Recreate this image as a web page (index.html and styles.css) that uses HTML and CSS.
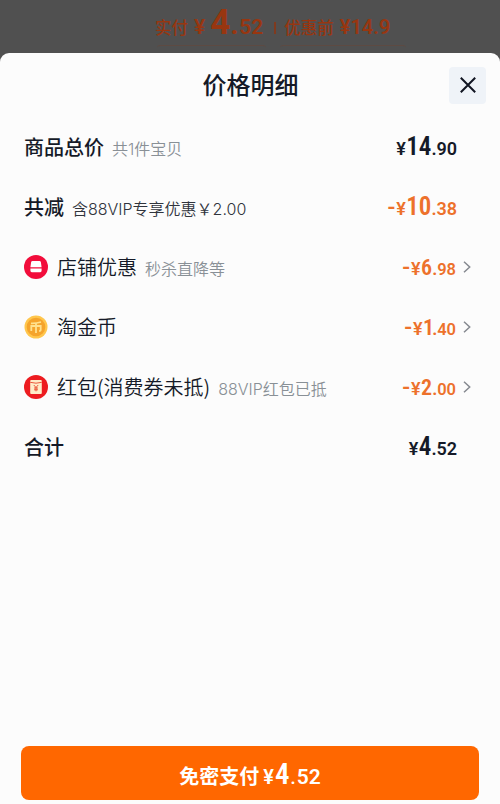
FILE: index.html
```html
<!DOCTYPE html>
<html lang="zh-CN">
<head>
<meta charset="utf-8">
<title>价格明细</title>
<link rel="stylesheet" href="styles.css">
</head>
<body>
<div class="screen">
  <div class="backdrop">
    <div class="summary"><span class="paid">实付</span><span class="paid-yen">¥</span><span class="paid-int">4</span><span class="paid-dot">.</span><span class="paid-dec">52</span><span class="bar"></span><span class="before">优惠前</span><span class="before-num">¥14.9</span></div>
    <div class="tags"><span></span><span></span></div>
  </div>
  <main class="sheet">
    <header class="head">
      <h1>价格明细</h1>
      <button class="close" aria-label="关闭"><svg width="18" height="18" viewBox="0 0 18 18"><path d="M1.8 1.8 16.2 16.2M16.2 1.8 1.8 16.2"/></svg></button>
    </header>
    <div class="rows">
      <div class="row strong">
        <span class="label">商品总价</span><span class="note">共1件宝贝</span>
        <span class="price"><span class="yen">¥</span><span class="int">14</span><span class="dot">.</span><span class="dec">90</span></span>
      </div>
      <div class="row strong">
        <span class="label">共减</span><span class="note dark">含88VIP专享优惠￥2.00</span>
        <span class="price off"><span class="minus">-</span><span class="yen">¥</span><span class="int">10</span><span class="dot">.</span><span class="dec">38</span></span>
      </div>
      <div class="row">
        <svg class="icon" viewBox="0 0 24 24"><circle cx="12" cy="12" r="12" fill="#f20d3b"/><path d="M8.6 6h6.8q1.3 0 1.5 1.2l.7 5H6.4l.7-5Q7.3 6 8.6 6zM6.4 13.6h11.2v2.2q0 1.4-1.4 1.4H7.8q-1.4 0-1.4-1.4z" fill="#fff"/></svg>
        <span class="label">店铺优惠</span><span class="note">秒杀直降等</span>
        <span class="price off small"><span class="minus">-</span><span class="yen">¥</span><span class="int">6</span><span class="dot">.</span><span class="dec">98</span></span>
        <svg class="chevron" viewBox="0 0 8 12"><path d="M1 .8 6.7 6 1 11.2"/></svg>
      </div>
      <div class="row">
        <svg class="icon" viewBox="0 0 24 24"><circle cx="12" cy="12" r="11.5" fill="#ffc64c"/><circle cx="12" cy="12" r="9.3" fill="#f5a42c"/><path d="M7 8.3Q12 8.5 17 7M7.3 16v-5h9.4v4.2q0 .8-1.6.8M12 8.2V18" fill="none" stroke="#ffe18e" stroke-width="1.8"/></svg>
        <span class="label">淘金币</span>
        <span class="price off small"><span class="minus">-</span><span class="yen">¥</span><span class="int one">1</span><span class="dot">.</span><span class="dec">40</span></span>
        <svg class="chevron" viewBox="0 0 8 12"><path d="M1 .8 6.7 6 1 11.2"/></svg>
      </div>
      <div class="row">
        <svg class="icon" viewBox="0 0 24 24"><circle cx="12" cy="12" r="12" fill="#ed1c20"/><rect x="6.2" y="5" width="11.6" height="14" rx="1" fill="#ffedc9"/><path d="M6.2 7.3q5.8 1.8 11.6 0M9.8 10l2.2 2.5 2.2-2.5M12 12.3v4M10 13h4M10 14.8h4" fill="none" stroke="#e84a2e" stroke-width=".9"/></svg>
        <span class="label">红包(消费券未抵)</span><span class="note">88VIP红包已抵</span>
        <span class="price off small"><span class="minus">-</span><span class="yen">¥</span><span class="int">2</span><span class="dot">.</span><span class="dec">00</span></span>
        <svg class="chevron" viewBox="0 0 8 12"><path d="M1 .8 6.7 6 1 11.2"/></svg>
      </div>
      <div class="row strong">
        <span class="label">合计</span>
        <span class="price"><span class="yen">¥</span><span class="int">4</span><span class="dot">.</span><span class="dec">52</span></span>
      </div>
    </div>
    <button class="pay"><span class="pay-label">免密支付</span><span class="price"><span class="yen">¥</span><span class="int">4</span><span class="dot">.</span><span class="dec">52</span></span></button>
  </main>
</div>
</body>
</html>
```
FILE: styles.css
```css
* { box-sizing: border-box; }
body { margin: 0; font-family: "Noto Sans CJK SC", sans-serif; color: #151a28; }
button { border: 0; padding: 0; font: inherit; }
.screen { width: 500px; height: 804px; background: #505050; display: flex; flex-direction: column; overflow: hidden; }
.backdrop { height: 53px; flex: none; }
.summary { height: 45px; display: flex; align-items: baseline; padding-left: 155px; color: #983610; line-height: 45px; white-space: nowrap; }
.tags { display: flex; gap: 14px; padding-left: 157px; }
.tags span { height: 6px; width: 109px; border-top: 1px solid #5d4a42; border-radius: 3px 3px 0 0; }
.tags span + span { width: 126px; }
.paid, .before { font-size: 16.5px; font-weight: 500; }
.paid-yen, .paid-int, .paid-dot, .paid-dec, .before-num { font-family: Roboto, sans-serif; font-weight: 600; }
.paid-yen { font-size: 21px; margin-left: 6px; }
.paid-int { font-size: 35px; margin-left: 5px; width: 20px; font-stretch: 88%; font-weight: 700; }
.paid-dot { font-size: 30px; width: 9px; }
.paid-dec { font-size: 21px; }
.bar { width: 2px; height: 12px; background: #803a1e; margin: 0 8px 0 11px; }
.before-num { font-size: 20px; margin-left: 6px; font-stretch: 88%; }
.sheet { flex: 1; background: #fcfcfc; border-radius: 9px 9px 0 0; display: flex; flex-direction: column; }
.head { height: 64px; display: grid; grid-template-columns: 37px 1fr 37px; padding: 0 14px; align-items: center; }
h1 { grid-column: 2; margin: 0; text-align: center; font-size: 24px; font-weight: 500; line-height: 62px; padding: 0 0 2px 1px; }
.close { width: 37px; height: 37px; background: #eff3f8; border-radius: 4px; display: grid; place-items: center; }
.close svg { fill: none; stroke: #111522; stroke-width: 2; }
.rows { padding: 0 24px; }
.row { height: 60px; display: flex; align-items: baseline; line-height: 60px; white-space: nowrap; }
.label { font-size: 20px; font-weight: 350; }
.strong .label { font-weight: 500; }
.note { margin-left: 8px; font-family: Inter, "Noto Sans CJK SC", sans-serif; font-size: 16px; font-weight: 350; color: #899096; }
.note.dark { color: #30343c; }
.icon { width: 24px; height: 24px; align-self: center; margin: 0 9px 1px 0; flex: none; }
.price { display: flex; align-items: baseline; font-family: Roboto, sans-serif; font-weight: 600; }
.row .price { margin-left: auto; padding-right: 19px; }
.row .price.small { padding-right: 0; }
.off { color: #ed712b; }
.minus { font-size: 23px; font-weight: 500; margin-right: 1px; }
.yen { font-size: 18px; font-stretch: 88%; margin-right: 1px; }
.row .yen { width: 9px; }
.int { font-size: 25px; font-stretch: 80%; }
.dot { font-size: 18px; margin: 0 1px 0 1px; }
.row .dot { width: 5px; margin: 0; }
.dec { font-size: 18px; font-stretch: 88%; }
.small .int { font-size: 22px; font-stretch: 84%; }
.small .dec { font-size: 16.5px; }
.small .one { letter-spacing: -2px; }
.chevron { width: 8px; height: 12px; margin: 0 5px 1px 7px; align-self: center; fill: none; stroke: #858990; stroke-width: 1.5; }
.pay { width: 458px; height: 54px; margin: auto 0 4px 21px; border-radius: 8px; background: #ff6700; color: #fff; display: flex; justify-content: center; align-items: baseline; line-height: 56px; }
.pay-label { font-size: 20px; font-weight: 600; margin-right: 4px; }
.pay .yen { font-size: 20px; }
.pay .int { font-size: 29px; font-stretch: 84%; }
.pay .dec { font-size: 21px; font-stretch: 92%; }
```
